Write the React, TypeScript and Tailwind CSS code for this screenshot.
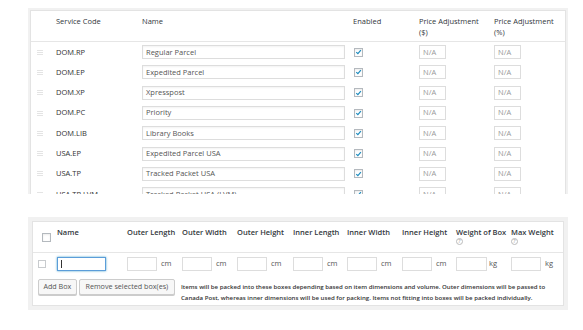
import React from "react";

const Check = () => (
  <span className="w-[9px] h-[9px] border border-[#b4b9be] bg-white flex items-center justify-center shadow-[inset_0_1px_2px_rgba(0,0,0,0.08)]">
    <svg viewBox="0 0 10 10" className="w-[8px] h-[8px]">
      <path d="M1.8 5.2 L4.1 7.4 L8.4 2.3" stroke="#1e8cbe" strokeWidth="1.7" fill="none" />
    </svg>
  </span>
);

const Handle = () => (
  <svg viewBox="0 0 6 5" className="w-[6px] h-[5px]">
    <rect x="0" y="0" width="6" height="0.8" fill="#dedede" />
    <rect x="0" y="2" width="6" height="0.8" fill="#dedede" />
    <rect x="0" y="4" width="6" height="0.8" fill="#dedede" />
  </svg>
);

const Help = () => (
  <span className="w-[7px] h-[7px] rounded-full border border-[#bbb] text-[#aaa] text-[5px] leading-[5px] flex items-center justify-center">?</span>
);

const services = [
  ["DOM.RP", "Regular Parcel"],
  ["DOM.EP", "Expedited Parcel"],
  ["DOM.XP", "Xpresspost"],
  ["DOM.PC", "Priority"],
  ["DOM.LIB", "Library Books"],
  ["USA.EP", "Expedited Parcel USA"],
  ["USA.TP", "Tracked Packet USA"],
  ["USA.TP.LVM", "Tracked Packet USA (LVM)"],
];

const dims: [string, string, string][] = [
  ["Outer Length", "w-[55px]", "cm"],
  ["Outer Width", "w-[55px]", "cm"],
  ["Outer Height", "w-[56px]", "cm"],
  ["Inner Length", "w-[54px]", "cm"],
  ["Inner Width", "w-[55px]", "cm"],
  ["Inner Height", "w-[54px]", "cm"],
];

export default function App() {
  return (
    <div className="w-[583px] h-[330px] bg-white pt-[8px] pl-[28px] overflow-hidden text-[#32373c]" style={{ fontFamily: '"Open Sans", "Noto Sans", sans-serif' }}>
      {/* Top services table */}
      <div className="w-[540px] h-[186px] bg-[#f1f1f1] pt-[2px] px-[2px] overflow-hidden">
        <div className="border border-[#e3e3e3] bg-white">
          <div className="flex h-[31px] border-b border-[#e6e6e6] pt-[5px] text-[7.5px] leading-[11px] text-[#32373c]">
            <div className="w-[25px]" />
            <div className="w-[86px]">Service Code</div>
            <div className="w-[211px]">Name</div>
            <div className="w-[66px]">Enabled</div>
            <div className="w-[75px]">Price Adjustment<br />($)</div>
            <div className="w-[71px]">Price Adjustment<br />(%)</div>
          </div>
          {services.map(([code, name]) => (
            <div key={code} className="flex items-center h-[20.3px] text-[7.5px]">
              <div className="w-[25px] flex justify-center pl-[2px] pr-[10px]">
                <Handle />
              </div>
              <div className="w-[86px] font-medium text-[#333]">{code}</div>
              <div className="w-[211px]">
                <div className="w-[203px] h-[14px] border border-[#ddd] shadow-[inset_0_1px_2px_rgba(0,0,0,0.05)] px-[3px] flex items-center text-[#555]">{name}</div>
              </div>
              <div className="w-[66px] pl-[1px]">
                <Check />
              </div>
              <div className="w-[75px]">
                <div className="w-[27px] h-[14px] border border-[#ddd] px-[3px] flex items-center text-[#999]">N/A</div>
              </div>
              <div className="w-[71px]">
                <div className="w-[27px] h-[14px] border border-[#ddd] px-[3px] flex items-center text-[#999]">N/A</div>
              </div>
            </div>
          ))}
        </div>
      </div>

      {/* Boxes table */}
      <div className="mt-[23px] w-[540px] h-[93px] bg-[#f1f1f1] p-[4px]">
        <div className="h-full border border-[#e3e3e3] bg-white">
          <div className="flex h-[31px] border-b border-[#e6e6e6] text-[7.5px] leading-[11px] font-semibold text-[#32373c]">
            <div className="w-[24px] flex items-center pl-[9px]">
              <span className="w-[9px] h-[9px] border border-[#b4b9be] bg-white shadow-[inset_0_1px_2px_rgba(0,0,0,0.08)]" />
            </div>
            <div className="w-[70px] pt-[5px]">Name</div>
            {dims.map(([label, w]) => (
              <div key={label} className={`${w} pt-[5px]`}>{label}</div>
            ))}
            <div className="w-[55px] pt-[5px]">
              <div>Weight of Box</div>
              <Help />
            </div>
            <div className="w-[52px] pt-[5px]">
              <div>Max Weight</div>
              <Help />
            </div>
          </div>
          <div className="flex items-center h-[22px] text-[7.5px] text-[#555]">
            <div className="w-[24px] pl-[5px]">
              <span className="block w-[8px] h-[8px] border border-[#c8cbce] bg-white" />
            </div>
            <div className="w-[70px]">
              <div className="w-[49px] h-[14px] border border-[#5b9dd9] shadow-[0_0_2px_rgba(30,140,190,0.8)] flex items-center pl-[3px]">
                <span className="w-px h-[8px] bg-[#333]" />
              </div>
            </div>
            {dims.map(([label, w, unit]) => (
              <div key={label} className={`${w} flex items-center gap-[4px]`}>
                <div className="w-[30px] h-[14px] border border-[#ddd]" />
                <span>{unit}</span>
              </div>
            ))}
            <div className="w-[55px] flex items-center gap-[2px]">
              <div className="w-[31px] h-[14px] border border-[#ddd]" />
              <span>kg</span>
            </div>
            <div className="w-[52px] flex items-center gap-[4px]">
              <div className="w-[30px] h-[14px] border border-[#ddd]" />
              <span>kg</span>
            </div>
          </div>
          <div className="flex pt-[4px] pl-[5px]">
            <button className="h-[16px] w-[39px] whitespace-nowrap border border-[#ccc] bg-[#f7f7f7] rounded-[2px] text-[7.2px] text-[#555] shadow-[0_1px_0_#ccc] leading-none">Add Box</button>
            <button className="ml-[2px] h-[16px] w-[97px] whitespace-nowrap border border-[#ccc] bg-[#f7f7f7] rounded-[2px] text-[7.2px] text-[#555] shadow-[0_1px_0_#ccc] leading-none">Remove selected box(es)</button>
            <p className="ml-[6px] w-[385px] text-[6.1px] leading-[11px] font-semibold text-[#333] pt-[1.5px]">
              Items will be packed into these boxes depending based on item dimensions and volume. Outer dimensions will be passed to Canada Post, whereas inner dimensions will be used for packing. Items not fitting into boxes will be packed individually.
            </p>
          </div>
        </div>
      </div>
    </div>
  );
}
